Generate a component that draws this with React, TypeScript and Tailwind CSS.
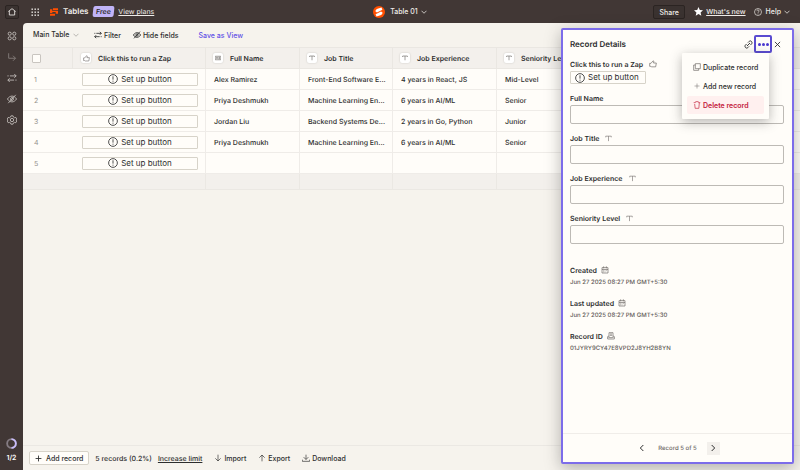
import type { ReactNode } from 'react'

type IconProps = { className?: string; strokeWidth?: number; children?: ReactNode }

const Icon = ({ className = 'size-3', strokeWidth = 2, children }: IconProps) => (
  <svg
    viewBox="0 0 24 24"
    fill="none"
    stroke="currentColor"
    strokeWidth={strokeWidth}
    aria-hidden="true"
    className={`shrink-0 ${className}`}
  >
    {children}
  </svg>
)

const HomeIcon = (props: IconProps) => (
  <Icon {...props}>
    <path d="M1 10.5 12 2l11 8.5M4 9v12h16V9" />
  </Icon>
)

const AppsIcon = (props: IconProps) => (
  <Icon {...props}>
    <circle cx="6.5" cy="6.5" r="3.8" />
    <circle cx="17.5" cy="6.5" r="3.8" />
    <circle cx="6.5" cy="17.5" r="3.8" />
    <circle cx="17.5" cy="17.5" r="3.8" />
  </Icon>
)

const BranchIcon = (props: IconProps) => (
  <Icon {...props}>
    <path d="M4 3v12h16M14.5 9l6 6-6 6" />
  </Icon>
)

const FilterIcon = (props: IconProps) => (
  <Icon {...props}>
    <path d="M1 7h3M7 7h15M17.5 2.5 22 7l-4.5 4.5M23 17h-3M17 17H2M6.5 12.5 2 17l4.5 4.5" />
  </Icon>
)

const EyeOffIcon = (props: IconProps) => (
  <Icon {...props}>
    <path d="M1 12C4 7.500 8 5 12 5s8 2.500 11 7C20 16.500 16 19 12 19s-8-2.500-11-7Z" />
    <circle cx="12" cy="12" r="3.5" />
    <path d="M21 2 3 22" />
  </Icon>
)

const GearIcon = (props: IconProps) => (
  <Icon {...props}>
    <path d="M9.500 2h5l1 3 2.500 1.500 3.200-.7 2.300 4.200-2 2 2 2.500-2.300 4-3.200-.7L15.500 19l-1 3h-5l-1-3L6 17.800l-3.200.7-2.300-4 2-2.500-2-2 2.300-4.200 3.200.7L8.500 5Z" />
    <circle cx="12" cy="12" r="4" />
  </Icon>
)

const GridIcon = () => (
  <svg viewBox="0 0 16 16" fill="currentColor" aria-hidden="true" className="size-2 shrink-0">
    {[1, 7, 13].map((y) =>
      [1, 7, 13].map((x) => <rect key={`${x}-${y}`} x={x} y={y} width="2.8" height="2.8" />),
    )}
  </svg>
)

const TablesLogo = () => (
  <svg viewBox="0 0 24 24" fill="#ff4f00" aria-hidden="true" className="size-2 shrink-0">
    <path d="M9 1h15v6H9zM0 4h7v6H0zM0 9h24v3H0zM0 12h7v3H0zM17 11h7v6h-7zM0 17h15v6H0z" />
  </svg>
)

const SpeedLogo = () => (
  <svg viewBox="0 0 24 24" aria-hidden="true" className="size-3 shrink-0">
    <circle cx="12" cy="12" r="12" fill="#ff4f00" />
    <path d="M5 11c0-3 1.500-4.500 4-5.500L17 3l1.800 4.500L8 13ZM19 13c0 3-1.500 4.500-4 5.500L7 21l-1.800-4.500L16 11Z" fill="#fff" />
  </svg>
)

const AlertIcon = (props: IconProps) => (
  <Icon {...props}>
    <circle cx="12" cy="12" r="10.5" />
    <path d="M12 5.500v8M12 16v2.500" />
  </Icon>
)

const ThumbIcon = (props: IconProps) => (
  <Icon {...props}>
    <path d="M2 10h4l6-7.500c2 0 3 1.200 2.500 3L13.500 9H22l-2 11.500H8L6 19H2Z" />
  </Icon>
)

const NameIcon = (props: IconProps) => (
  <Icon {...props}>
    <path d="M1 5h22v14H1ZM5 15c0-4 6-4 6 0M14 9h6M14 12h6M14 15h6" />
    <circle cx="8" cy="10" r="1.500" />
  </Icon>
)

const TextIcon = (props: IconProps) => (
  <Icon {...props}>
    <path d="M2.500 8V4h19v4M12 4v17" />
  </Icon>
)

const CalendarIcon = (props: IconProps) => (
  <Icon {...props}>
    <path d="M3 5h18v16H3ZM8 1v6M16 1v6M3 10.500h18M7 14h2M11 14h2M15 14h2M7 17.500h2M11 17.500h2" />
  </Icon>
)

const RecordIcon = (props: IconProps) => (
  <Icon {...props}>
    <path d="M6 13V2h12v11M9 6h6M9 10h6M2 21v-6l3-4M22 21v-6l-3-4M2 21h20M2 15h6v2h8v-2h6" />
  </Icon>
)

const LinkIcon = (props: IconProps) => (
  <Icon {...props}>
    <path d="m8 16 8-8M10.500 7 14 3.500c4-3.500 9.500 2 6.500 6.500L17 13.500M13.500 17 10 20.500C6 24 .5 18.500 3.500 14L7 10.500" />
  </Icon>
)

const ChevronDown = (props: IconProps) => (
  <Icon {...props}>
    <path d="m2 7 10 10L22 7" />
  </Icon>
)

const ChevronLeft = (props: IconProps) => (
  <Icon {...props}>
    <path d="m16 3-9 9 9 9" />
  </Icon>
)

const ChevronRight = (props: IconProps) => (
  <Icon {...props}>
    <path d="m8 3 9 9-9 9" />
  </Icon>
)

const PlusIcon = (props: IconProps) => (
  <Icon {...props}>
    <path d="M12 2v20M2 12h20" />
  </Icon>
)

const HelpIcon = (props: IconProps) => (
  <Icon {...props}>
    <circle cx="12" cy="12" r="10.5" />
    <path d="M8.500 9.500c0-5 7-4.500 7-.5 0 2.500-3.500 2.500-3.500 5.500M12 16.500V19" />
  </Icon>
)

const CopyIcon = (props: IconProps) => (
  <Icon {...props}>
    <path d="M7 2h15v15H7ZM7 6H2v16h15v-5" />
  </Icon>
)

const TrashIcon = (props: IconProps) => (
  <Icon {...props}>
    <path d="M2 5h5l1-3h8l1 3h5M5 9l1.500 13h11L19 5" />
  </Icon>
)

const sidebarIcons = [
  { label: 'Views', icon: AppsIcon, tone: 'text-[#c9c4c0]' },
  { label: 'Linked records', icon: BranchIcon, tone: 'text-[#8c8481]' },
  { label: 'Filters', icon: FilterIcon, tone: 'text-[#c9c4c0]' },
  { label: 'Hidden fields', icon: EyeOffIcon, tone: 'text-[#c9c4c0]' },
  { label: 'Settings', icon: GearIcon, tone: 'text-[#c9c4c0]' },
]

const columns = [
  { label: 'Full Name', icon: NameIcon },
  { label: 'Job Title', icon: TextIcon },
  { label: 'Job Experience', icon: TextIcon },
  { label: 'Seniority Level', icon: TextIcon },
]

const records = [
  ['Alex Ramirez', 'Front-End Software E...', '4 years in React, JS', 'Mid-Level'],
  ['Priya Deshmukh', 'Machine Learning En...', '6 years in AI/ML', 'Senior'],
  ['Jordan Liu', 'Backend Systems De...', '2 years in Go, Python', 'Junior'],
  ['Priya Deshmukh', 'Machine Learning En...', '6 years in AI/ML', 'Senior'],
  ['', '', '', ''],
]

const fields = [
  { id: 'full-name', label: 'Full Name', icon: null },
  { id: 'job-title', label: 'Job Title', icon: TextIcon },
  { id: 'job-experience', label: 'Job Experience', icon: TextIcon },
  { id: 'seniority-level', label: 'Seniority Level', icon: TextIcon },
]

const meta = [
  { label: 'Created', value: 'Jun 27 2025 08:27 PM GMT+5:30', icon: CalendarIcon },
  { label: 'Last updated', value: 'Jun 27 2025 08:27 PM GMT+5:30', icon: CalendarIcon },
  { label: 'Record ID', value: '01JYRY9CY47E8VPD2J8YH2B8YN', icon: RecordIcon },
]

const TopBar = () => (
  <header className="grid h-[23px] shrink-0 grid-cols-[1fr_auto_1fr] items-center px-[5px] text-[7px] leading-[13px] text-[#f0ede9]">
    <div className="flex items-center">
      <button aria-label="Home" className="flex size-[14px] items-center justify-center rounded-xs border border-[#2b2422] bg-[#3a3230]">
        <HomeIcon className="size-2" strokeWidth={2.5} />
      </button>
      <button aria-label="Apps" className="ml-3">
        <GridIcon />
      </button>
      <TablesLogoLink />
      <span className="ml-1 h-[11px] -skew-x-6 rounded-xs bg-[#c1b4f8] px-[3px] leading-[11px] font-semibold text-[#2d2e2e]">
        Free
      </span>
      <a href="#plans" className="ml-[5px] underline">
        View plans
      </a>
    </div>
    <button className="flex items-center font-medium">
      <SpeedLogo />
      <span className="ml-[5px]">Table 01</span>
      <ChevronDown className="ml-[3px] size-1.5" strokeWidth={3} />
    </button>
    <div className="flex items-center justify-end pr-[5px]">
      <button className="h-[14px] w-8 rounded-xs border border-[#2b2422] bg-[#3a3230] font-medium">
        Share
      </button>
      <svg viewBox="0 0 24 24" fill="#fff" aria-hidden="true" className="ml-[9px] size-[9px]">
        <path d="m12 0 3.500 8 8.500.8-6.500 5.700L19.500 23 12 18.500 4.500 23l2-8.500L0 8.800 8.500 8Z" />
      </svg>
      <a href="#whats-new" className="ml-[3px] font-medium underline">
        What's new
      </a>
      <button className="ml-2 flex items-center font-medium">
        <HelpIcon className="size-2" />
        <span className="ml-1">Help</span>
        <ChevronDown className="ml-[3px] size-1.5" strokeWidth={3} />
      </button>
    </div>
  </header>
)

const TablesLogoLink = () => (
  <span className="ml-[11px] flex items-center gap-[5px] text-[8px] font-semibold">
    <TablesLogo />
    Tables
  </span>
)

const Sidebar = () => (
  <nav className="flex w-[23px] shrink-0 flex-col items-center pt-2 pb-2">
    <div className="flex flex-col gap-[11px]">
      {sidebarIcons.map(({ label, icon: SideIcon, tone }) => (
        <button key={label} aria-label={label} className={tone}>
          <SideIcon className="block size-2.5" strokeWidth={2} />
        </button>
      ))}
    </div>
    <svg viewBox="0 0 24 24" fill="none" strokeWidth="4" aria-hidden="true" className="mt-auto size-[11px]">
      <circle cx="12" cy="12" r="9.500" stroke="#857c83" />
      <path d="M12 2.500a9.500 9.500 0 0 1 0 19" stroke="#c9bdfb" />
    </svg>
    <span className="mt-1 text-[7px] leading-[9px] font-semibold text-white">1/2</span>
  </nav>
)

const Toolbar = () => (
  <div className="flex h-6 shrink-0 items-center pl-2.5 text-[7px] font-medium">
    <div className="flex items-center">
      <select aria-label="View" className="h-4 appearance-none leading-4">
        <option>Main Table</option>
      </select>
      <ChevronDown className="ml-[3px] size-1.5 text-[#95928e]" strokeWidth={2.5} />
    </div>
    <button className="ml-[15px] flex items-center gap-0.5">
      <FilterIcon className="size-2" strokeWidth={2.5} />
      Filter
    </button>
    <button className="ml-3 flex items-center gap-0.5">
      <EyeOffIcon className="size-2" strokeWidth={2.5} />
      Hide fields
    </button>
    <button className="ml-5 text-[#5f50e6]">Save as View</button>
  </div>
)

const Chip = ({ children }: { children: ReactNode }) => (
  <span className="flex size-2.5 shrink-0 items-center justify-center rounded-xs bg-white text-[#6b6664] shadow-[0_0_2px_rgba(0,0,0,0.18)]">
    {children}
  </span>
)

const RecordsTable = () => (
  <table className="w-full table-fixed border-separate border-spacing-0 text-left text-[7px]">
    <colgroup>
      <col className="w-[50px]" />
      <col className="w-[133px]" />
      <col className="w-[94px]" />
      <col className="w-[93px]" />
      <col className="w-[104px]" />
      <col className="w-[104px]" />
      <col />
    </colgroup>
    <thead>
      <tr className="h-[22px] bg-[#f3f0ec] *:border-y *:border-[#eae7e2] *:p-0 *:font-semibold">
        <th className="border-r pl-2!">
          <input
            type="checkbox"
            aria-label="Select all"
            className="ml-px block size-[9px] appearance-none rounded-[1px] border border-[#c9c5c0] bg-[#fffdf9]"
          />
        </th>
        <th className="border-r pl-2!">
          <div className="flex items-center gap-[7px]">
            <Chip>
              <ThumbIcon className="size-[7px]" />
            </Chip>
            Click this to run a Zap
          </div>
        </th>
        {columns.map(({ label, icon: ColIcon }) => (
          <th key={label} className="border-r pl-[7px]!">
            <div className="flex items-center gap-[7px]">
              <Chip>
                <ColIcon className="size-1.5" strokeWidth={2.5} />
              </Chip>
              {label}
            </div>
          </th>
        ))}
        <th />
      </tr>
    </thead>
    <tbody>
      {records.map((record, i) => (
        <tr key={i} className="h-[21px] bg-[#fffdf9] *:border-b *:border-[#efece8] *:p-0">
          <td className="pl-[11px]! text-[#95928e]">{i + 1}</td>
          <td className="border-r pr-[7px]! pl-[9px]!">
            <button className="flex h-[13px] w-full items-center justify-center gap-[3px] rounded-[1px] border border-[#d7d3c9] text-[8px]">
              <AlertIcon className="size-2.5" />
              Set up button
            </button>
          </td>
          {record.map((value, j) => (
            <td key={j} className="overflow-hidden border-r pl-2! font-medium whitespace-nowrap">
              {value}
            </td>
          ))}
          <td />
        </tr>
      ))}
      <tr className="h-4 bg-[#f3f0ec] *:border-b *:border-[#ebe8e3] *:p-0">
        <td colSpan={2} className="border-r" />
        <td className="border-r" />
        <td className="border-r" />
        <td className="border-r" />
        <td className="border-r" />
        <td />
      </tr>
    </tbody>
  </table>
)

const BottomBar = () => (
  <footer className="mt-auto flex h-[25px] shrink-0 items-center border-t border-[#ebe8e3] pl-1.5 text-[7px] font-medium">
    <button className="flex h-[14px] items-center gap-1 rounded-xs border border-[#d7d3c9] bg-[#fffdf9] px-[5px]">
      <PlusIcon className="size-[7px]" strokeWidth={3} />
      Add record
    </button>
    <span className="ml-1.5">5 records (0.2%)</span>
    <a href="#limit" className="ml-1.5 underline">
      Increase limit
    </a>
    <button className="ml-3 flex items-center gap-0.5">
      <Icon className="size-2">
        <path d="M12 2v19M4 13l8 8 8-8" />
      </Icon>
      Import
    </button>
    <button className="ml-3 flex items-center gap-0.5">
      <Icon className="size-2">
        <path d="M12 22V3M4 11l8-8 8 8" />
      </Icon>
      Export
    </button>
    <button className="ml-3 flex items-center gap-0.5">
      <Icon className="size-2">
        <path d="M12 2v14M5 9.500l7 7 7-7M1 17v5h22v-5" />
      </Icon>
      Download
    </button>
  </footer>
)

const RecordMenu = () => (
  <div
    role="menu"
    className="absolute top-[23px] right-[23px] z-10 flex w-[87px] flex-col gap-px rounded-[1px] bg-[#fffdf9] px-[5px] py-[5px] text-[7px] font-medium whitespace-nowrap shadow-[0_3px_12px_rgba(45,46,46,0.35)]"
  >
    <button role="menuitem" className="flex h-[18px] items-center gap-0.5 px-1.5">
      <CopyIcon className="size-2 text-[#6b6664]" />
      Duplicate record
    </button>
    <button role="menuitem" className="flex h-[18px] items-center gap-0.5 px-1.5">
      <PlusIcon className="size-2 p-px text-[#6b6664]" />
      Add new record
    </button>
    <button role="menuitem" className="flex h-[18px] items-center gap-0.5 rounded-xs bg-[#fff0ef] px-1.5 font-semibold text-[#c4213c]">
      <TrashIcon className="size-2" />
      Delete record
    </button>
  </div>
)

const RecordPanel = () => (
  <aside className="absolute top-7 right-1.5 bottom-1.5 flex w-[233px] flex-col rounded-xs border-2 border-[#7c6cea] bg-[#fffdf9] shadow-[0_4px_16px_rgba(45,46,46,0.35)]">
    <div className="flex h-7 shrink-0 items-center pr-[11px] pl-[7px]">
      <h2 className="text-[8px] font-semibold">Record Details</h2>
      <button aria-label="Copy link" className="ml-auto">
        <LinkIcon className="size-[9px]" strokeWidth={2.5} />
      </button>
      <button
        aria-label="More actions"
        className="ml-px flex h-[18px] w-[18px] items-center justify-center gap-px rounded-xs border-2 border-[#5a4bd0]"
      >
        <span className="size-[3px] rounded-full bg-[#4b3ad0]" />
        <span className="size-[3px] rounded-full bg-[#4b3ad0]" />
        <span className="size-[3px] rounded-full bg-[#4b3ad0]" />
      </button>
      <button aria-label="Close" className="ml-0.5">
        <Icon className="size-[7px]" strokeWidth={3}>
          <path d="m3 3 18 18M21 3 3 21" />
        </Icon>
      </button>
    </div>
    <RecordMenu />
    <div className="min-h-0 flex-1 overflow-y-auto pr-2 pl-[7px] text-[7px]">
      <div className="flex h-3 items-center gap-1.5 font-semibold">
        Click this to run a Zap
        <ThumbIcon className="size-2 text-[#6b6664]" />
      </div>
      <button className="mt-px flex h-[13px] items-center gap-[3px] rounded-[1px] border border-[#d7d3c9] pr-1.5 pl-1 text-[8px]">
        <AlertIcon className="size-2.5" />
        Set up button
      </button>
      <div className="mt-2 flex flex-col gap-2">
        {fields.map(({ id, label, icon: FieldIcon }) => (
          <div key={id}>
            <label htmlFor={id} className="flex h-3 items-center gap-1.5 font-semibold">
              {label}
              {FieldIcon && <FieldIcon className="size-[7px] text-[#6b6664]" />}
            </label>
            <input
              id={id}
              type="text"
              className="mt-px block h-[19px] w-full rounded-xs border border-[#bdbab5] bg-transparent px-1"
            />
          </div>
        ))}
      </div>
      <dl className="mt-5 flex flex-col gap-2">
        {meta.map(({ label, value, icon: MetaIcon }) => (
          <div key={label}>
            <dt className="flex h-3 items-center gap-1 font-semibold">
              {label}
              <MetaIcon className="size-2 text-[#6b6664]" />
            </dt>
            <dd className="h-[13px] text-[6px] leading-[13px] font-medium text-[#5f5b58]">{value}</dd>
          </div>
        ))}
      </dl>
    </div>
    <div className="flex h-[29px] shrink-0 items-center justify-center gap-2.5 border-t border-[#f0ede9] text-[6px] font-medium text-[#6b6664]">
      <button aria-label="Previous record" className="flex size-[13px] items-center justify-center text-[#2d2e2e]">
        <ChevronLeft className="size-2" strokeWidth={3} />
      </button>
      Record 5 of 5
      <button aria-label="Next record" className="flex size-[13px] items-center justify-center bg-[#f3f0ec] text-[#2d2e2e]">
        <ChevronRight className="size-2" strokeWidth={3} />
      </button>
    </div>
  </aside>
)

const App = () => {
  return (
    <div className="relative flex h-screen flex-col overflow-hidden bg-[#413735] font-['Inter',sans-serif] leading-[11px] text-[#2d2e2e] [text-rendering:geometricPrecision]">
      <TopBar />
      <div className="flex min-h-0 flex-1">
        <Sidebar />
        <main className="flex min-w-0 flex-1 flex-col overflow-hidden rounded-tl bg-[#f6f3ed]">
          <Toolbar />
          <RecordsTable />
          <BottomBar />
        </main>
      </div>
      <RecordPanel />
    </div>
  )
}

export default App
